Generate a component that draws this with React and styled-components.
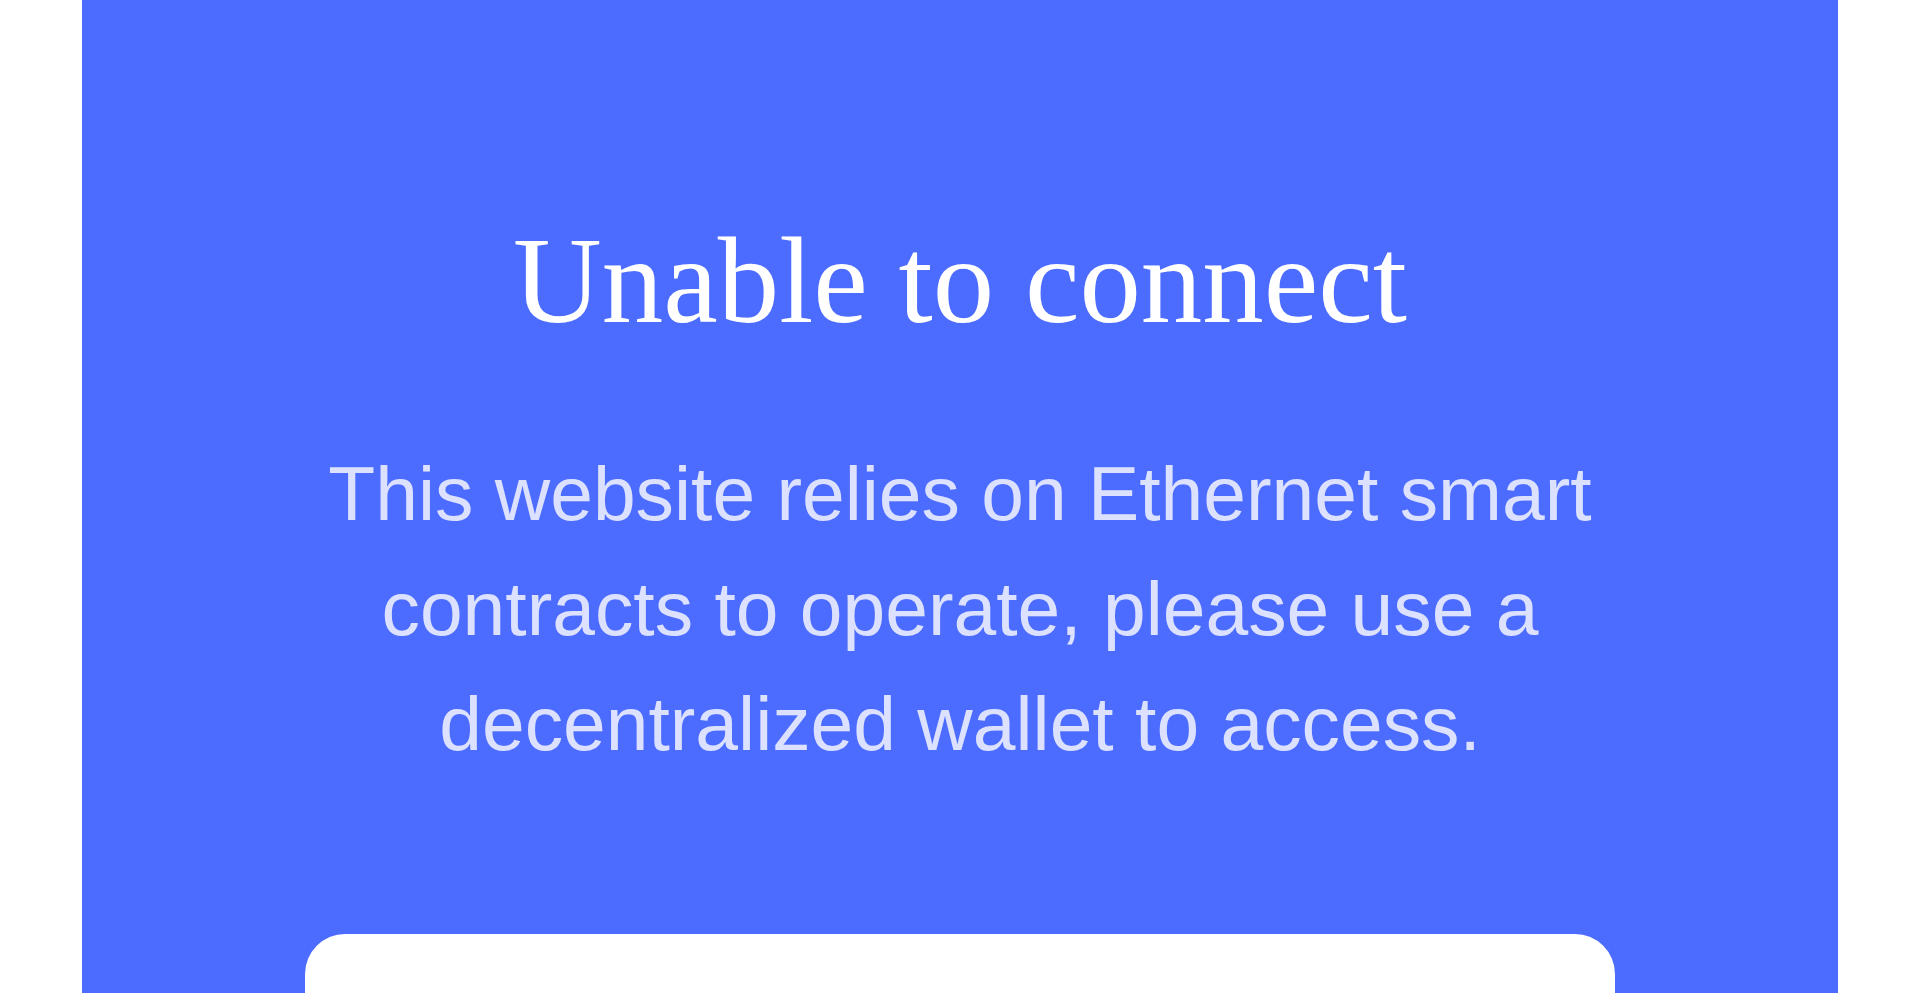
import React from "react";
import styled, { createGlobalStyle } from "styled-components";

const GlobalStyle = createGlobalStyle`
  html, body {
    margin: 0;
    padding: 0;
    background: #ffffff;
    overflow: hidden;
  }
  * { box-sizing: border-box; }
`;

const Page = styled.div`
  padding: 0 82px;
  height: 100vh;
`;

const Panel = styled.main`
  background: #4c6bff;
  height: 100%;
  display: flex;
  flex-direction: column;
  align-items: center;
  padding-top: 207px;
  overflow: hidden;
`;

const Title = styled.h1`
  margin: 0;
  font-family: "Liberation Serif", "Times New Roman", serif;
  font-weight: 400;
  font-size: 122.88px;
  line-height: 1.2;
  color: #ffffff;
  text-align: center;
`;

const Message = styled.p`
  margin: 81.5px 0 0;
  max-width: 1400px;
  font-family: "Liberation Sans", Arial, sans-serif;
  font-size: 76.8px;
  line-height: 1.5;
  color: rgba(255, 255, 255, 0.8);
  text-align: center;
`;

const Card = styled.section`
  flex-shrink: 0;
  margin-top: 152.6px;
  width: 1310px;
  height: 320px;
  background: #ffffff;
  border-radius: 40px 40px 0 0;
`;

export default function App() {
  return (
    <>
      <GlobalStyle />
      <Page>
        <Panel>
          <Title>Unable to connect</Title>
          <Message>
            This website relies on Ethernet smart contracts to operate, please
            use a decentralized wallet to access.
          </Message>
          <Card />
        </Panel>
      </Page>
    </>
  );
}
